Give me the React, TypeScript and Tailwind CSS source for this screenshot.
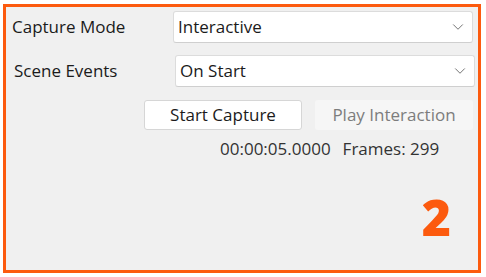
import { ChevronDown } from 'lucide-react';

function Dropdown({ value, className }: { value: string; className?: string }) {
  return (
    <div
      className={
        'flex h-[32px] w-[300px] items-center justify-between rounded-[3px] border border-[#dcdcdc] border-b-[#cfcfcf] bg-white pl-[4px] pr-[5px] ' +
        (className ?? '')
      }
    >
      <span className="text-[17px] text-[#1b1b1b]">{value}</span>
      <ChevronDown size={18} strokeWidth={1.3} className="text-[#707070]" />
    </div>
  );
}

export default function App() {
  return (
    <div className="h-[277px] w-[486px] bg-white pl-[3px] pt-[4px] font-['Open_Sans',sans-serif]">
      <div className="flex h-[269px] w-[478px] flex-col border-[3px] border-[#fc5a0e] bg-[#f0f0f0] pt-[4px]">
        <div className="flex items-center">
          <span className="ml-[6px] w-[161px] text-[17px] text-[#1b1b1b]">Capture Mode</span>
          <Dropdown value="Interactive" />
        </div>
        <div className="mt-[12px] flex items-center">
          <span className="ml-[8px] w-[161px] text-[17px] text-[#1b1b1b]">Scene Events</span>
          <Dropdown value="On Start" />
        </div>
        <div className="mt-[13px] flex gap-[13px] pl-[138px]">
          <button className="h-[30px] w-[158px] rounded-[3px] border border-[#d6d6d6] bg-white text-[17px] text-[#1b1b1b]">
            Start Capture
          </button>
          <button className="h-[30px] w-[158px] rounded-[3px] bg-[#f6f6f6] text-[17px] text-[#7d7d7d]">
            Play Interaction
          </button>
        </div>
        <div className="mt-[8px] flex gap-[12px] pl-[214px] text-[17px] leading-[22px] text-[#333333]">
          <span>00:00:05.0000</span>
          <span>Frames: 299</span>
        </div>
        <div className="mt-auto mb-[28px] flex justify-end pr-[27px]">
          <span className="text-[50px] font-extrabold leading-[50px] text-[#fc5a0e]">2</span>
        </div>
      </div>
    </div>
  );
}
